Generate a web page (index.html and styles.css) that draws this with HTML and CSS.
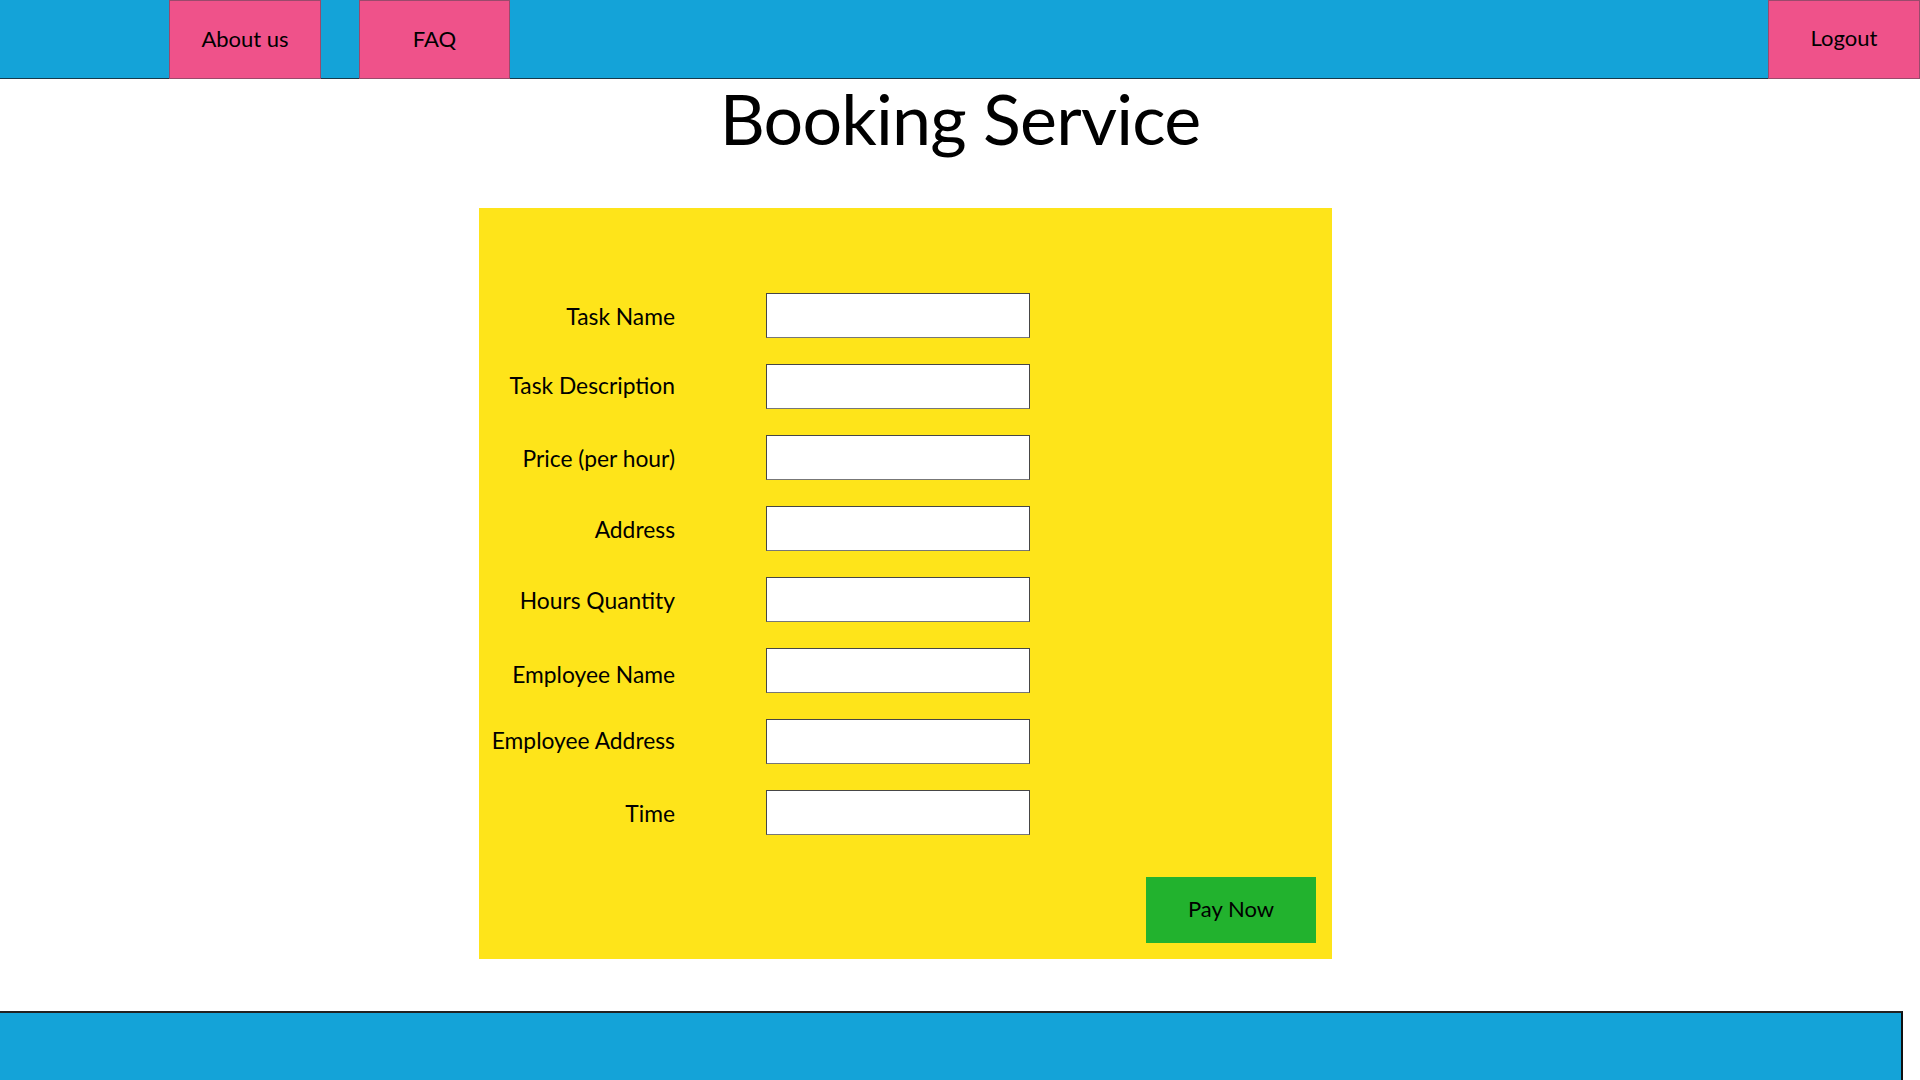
FILE: index.html
```html
<!DOCTYPE html>
<html lang="en">
<head>
<meta charset="utf-8">
<title>Booking Service</title>
<link rel="stylesheet" href="styles.css">
</head>
<body>
<header class="topbar">
  <nav class="nav-left">
    <a class="nav-btn" href="#">About us</a>
    <a class="nav-btn" href="#">FAQ</a>
  </nav>
  <a class="nav-btn nav-logout" href="#">Logout</a>
</header>

<main class="content">
  <h1 class="title">Booking Service</h1>
  <form class="panel">
    <div class="fields">
      <label class="field-label" for="f1">Task Name</label>
      <input class="field-input" id="f1" type="text">
      <label class="field-label lift" for="f2">Task Description</label>
      <input class="field-input" id="f2" type="text">
      <label class="field-label" for="f3">Price (per hour)</label>
      <input class="field-input" id="f3" type="text">
      <label class="field-label" for="f4">Address</label>
      <input class="field-input" id="f4" type="text">
      <label class="field-label" for="f5">Hours Quantity</label>
      <input class="field-input" id="f5" type="text">
      <label class="field-label drop" for="f6">Employee Name</label>
      <input class="field-input" id="f6" type="text">
      <label class="field-label lift" for="f7">Employee Address</label>
      <input class="field-input" id="f7" type="text">
      <label class="field-label" for="f8">Time</label>
      <input class="field-input" id="f8" type="text">
    </div>
    <button class="pay-btn" type="button">Pay Now</button>
  </form>
</main>

<footer class="bottombar"></footer>
</body>
</html>
```
FILE: styles.css
```css
* { box-sizing: border-box; }

html, body {
  margin: 0;
  padding: 0;
}

body {
  width: 1920px;
  height: 1080px;
  overflow: hidden;
  background: #ffffff;
  font-family: Lato, "Open Sans", sans-serif;
  color: #000;
  display: flex;
  flex-direction: column;
}

.topbar {
  height: 79px;
  background: #14a3d8;
  border-bottom: 1px solid #17394a;
  display: flex;
  align-items: stretch;
  padding-left: 169px;
}

.nav-left {
  display: flex;
  gap: 38px;
}

.nav-btn {
  width: 152px;
  height: 79px;
  margin-bottom: -1px;
  background: #ef528a;
  border: 1px solid #9a4a6c;
  color: #000;
  text-decoration: none;
  font-size: 22px;
  display: flex;
  align-items: center;
  justify-content: center;
  padding-bottom: 2px;
}

.nav-btn + .nav-btn { width: 151px; }

.nav-logout {
  margin-left: auto;
  padding-bottom: 4px;
}

.content {
  display: flex;
  flex-direction: column;
}

.title {
  margin: 0;
  text-align: center;
  font-weight: 400;
  font-size: 70px;
  line-height: 78px;
  height: 129px;
  letter-spacing: -0.8px;
}

.panel {
  margin: 0 0 0 479px;
  width: 853px;
  height: 751px;
  background: #fee41a;
  display: flex;
  flex-direction: column;
  padding: 85px 16px 16px 0;
}

.fields {
  display: grid;
  grid-template-columns: 196px 264px;
  column-gap: 91px;
  row-gap: 26px;
  align-items: center;
}

.field-label {
  text-align: right;
  font-size: 22.8px;
  line-height: 28px;
  white-space: nowrap;
}

.field-label.lift { margin-top: -4px; }
.field-label.drop { margin-top: 6px; }

.field-input {
  width: 264px;
  height: 45px;
  margin: 0;
  background: #fff;
  border: 1px solid #464646;
  border-bottom-color: #777;
  font-family: inherit;
  font-size: 18px;
}

.pay-btn {
  align-self: flex-end;
  margin-top: auto;
  width: 170px;
  height: 66px;
  background: #22b22e;
  border: none;
  font-family: inherit;
  font-size: 22px;
  color: #000;
  padding: 0 0 4px;
}

.bottombar {
  margin-top: auto;
  width: 1903px;
  height: 69px;
  background: #14a3d8;
  border-top: 2px solid #222;
  border-right: 2px solid #111;
}
```
